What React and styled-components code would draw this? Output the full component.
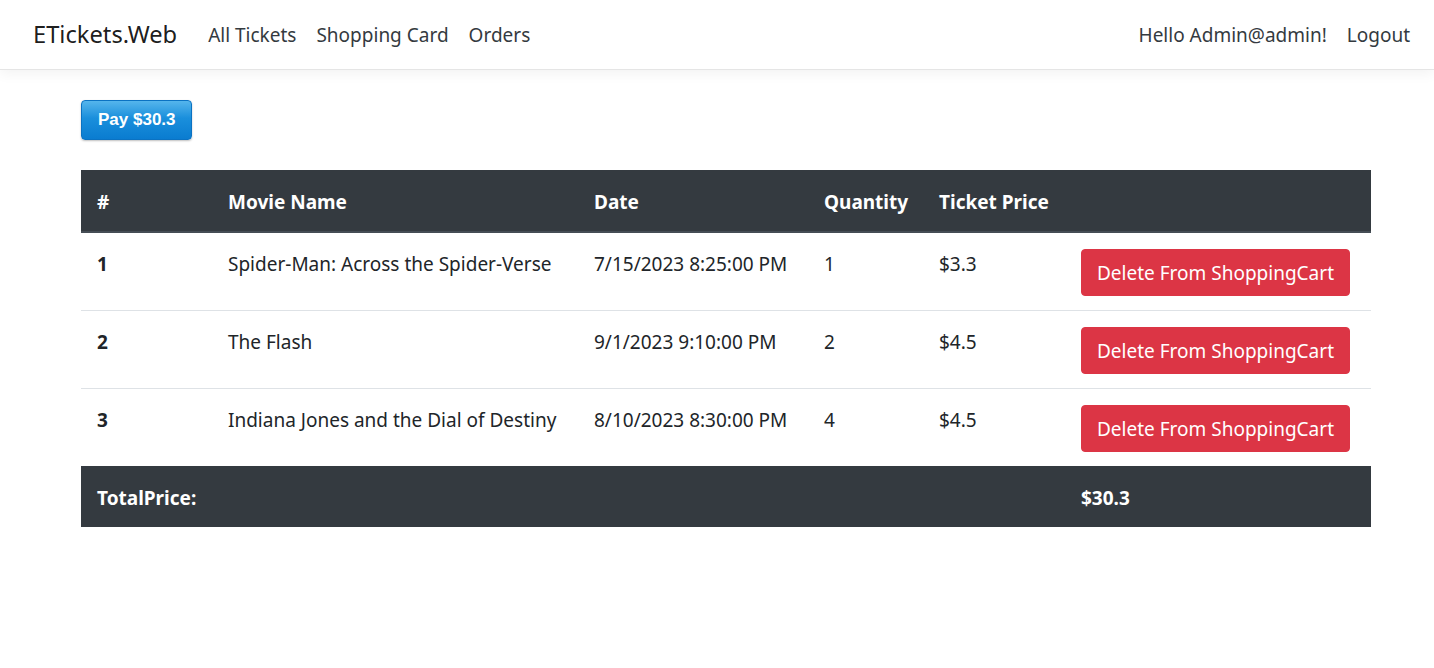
import React from "react";
import styled, { createGlobalStyle } from "styled-components";

const Global = createGlobalStyle`
  html, body { margin: 0; padding: 0; background: #fff; }
  body {
    font-family: "Noto Sans", "Open Sans", sans-serif;
    font-size: 19px;
    line-height: 1.5;
    color: #212529;
  }
  * { box-sizing: border-box; }
`;

const NavBar = styled.header`
  height: 70px;
  display: flex;
  align-items: center;
  justify-content: space-between;
  padding: 1px 24px 0 33px;
  background: #fff;
  border-bottom: 1px solid #e5e5e5;
  box-shadow: 0 4px 12px rgba(0, 0, 0, 0.05);
`;

const NavGroup = styled.nav`
  display: flex;
  align-items: center;
  gap: 20px;
`;

const Brand = styled.a`
  font-size: 23.7px;
  color: rgba(0, 0, 0, 0.9);
  text-decoration: none;
  margin-right: 11px;
`;

const NavLink = styled.a`
  font-size: 19px;
  color: #343a40;
  text-decoration: none;
`;

const Main = styled.main`
  padding: 30px 63px 40px 81px;
`;

const PayButton = styled.button`
  font-family: "Liberation Sans", Arial, sans-serif;
  font-weight: bold;
  font-size: 17px;
  color: #fff;
  height: 40px;
  padding: 0 15px 0 16px;
  border: 1px solid #0b72c2;
  border-radius: 4px;
  background: linear-gradient(to bottom, #55b5ec 0%, #1a8fdc 45%, #0a7cd0 100%);
  box-shadow: 0 1px 2px rgba(0, 0, 0, 0.25);
  cursor: pointer;
`;

const Table = styled.table`
  margin-top: 30px;
  width: 100%;
  border-collapse: collapse;
  table-layout: fixed;
`;

const HeadCell = styled.th`
  background: #343a40;
  color: #fff;
  font-weight: bold;
  text-align: left;
  padding: 18px 16px 15px;
  line-height: 28px;
  border-bottom: 2px solid #454d55;
`;

const Row = styled.tr`
  border-bottom: 1px solid #dee2e6;
  &:last-child { border-bottom: none; }
`;

const Cell = styled.td`
  padding: ${(p) => (p.$action ? "16px 16px 14px" : "16px 16px 13px")};
  vertical-align: top;
  line-height: 30px;
  font-weight: ${(p) => (p.$bold ? "bold" : "normal")};
`;

const ActionWrap = styled.div`
  display: flex;
  height: 47px;
`;

const FootCell = styled.td`
  background: #343a40;
  color: #fff;
  font-weight: bold;
  padding: 18px 16px 14px;
  line-height: 29px;
`;

const DeleteButton = styled.button`
  font-family: inherit;
  font-size: 19px;
  line-height: 27px;
  color: #fff;
  background: #dc3545;
  border: 1px solid #dc3545;
  border-radius: 4px;
  padding: 10px 15px 8px 15px;
  cursor: pointer;
  white-space: nowrap;
`;

const rows = [
  { id: 1, name: "Spider-Man: Across the Spider-Verse", date: "7/15/2023 8:25:00 PM", qty: 1, price: "$3.3" },
  { id: 2, name: "The Flash", date: "9/1/2023 9:10:00 PM", qty: 2, price: "$4.5" },
  { id: 3, name: "Indiana Jones and the Dial of Destiny", date: "8/10/2023 8:30:00 PM", qty: 4, price: "$4.5" },
];

export default function App() {
  return (
    <>
      <Global />
      <NavBar>
        <NavGroup>
          <Brand href="#">ETickets.Web</Brand>
          <NavLink href="#">All Tickets</NavLink>
          <NavLink href="#">Shopping Card</NavLink>
          <NavLink href="#">Orders</NavLink>
        </NavGroup>
        <NavGroup>
          <NavLink href="#">Hello Admin@admin!</NavLink>
          <NavLink href="#">Logout</NavLink>
        </NavGroup>
      </NavBar>
      <Main>
        <PayButton>Pay $30.3</PayButton>
        <Table>
          <colgroup>
            <col style={{ width: 131 }} />
            <col style={{ width: 366 }} />
            <col style={{ width: 230 }} />
            <col style={{ width: 115 }} />
            <col style={{ width: 142 }} />
            <col />
          </colgroup>
          <thead>
            <tr>
              <HeadCell>#</HeadCell>
              <HeadCell>Movie Name</HeadCell>
              <HeadCell>Date</HeadCell>
              <HeadCell>Quantity</HeadCell>
              <HeadCell>Ticket Price</HeadCell>
              <HeadCell></HeadCell>
            </tr>
          </thead>
          <tbody>
            {rows.map((r) => (
              <Row key={r.id}>
                <Cell $bold>{r.id}</Cell>
                <Cell>{r.name}</Cell>
                <Cell>{r.date}</Cell>
                <Cell>{r.qty}</Cell>
                <Cell>{r.price}</Cell>
                <Cell $action>
                  <ActionWrap>
                    <DeleteButton>Delete From ShoppingCart</DeleteButton>
                  </ActionWrap>
                </Cell>
              </Row>
            ))}
          </tbody>
          <tfoot>
            <tr>
              <FootCell colSpan={5}>TotalPrice:</FootCell>
              <FootCell>$30.3</FootCell>
            </tr>
          </tfoot>
        </Table>
      </Main>
    </>
  );
}
